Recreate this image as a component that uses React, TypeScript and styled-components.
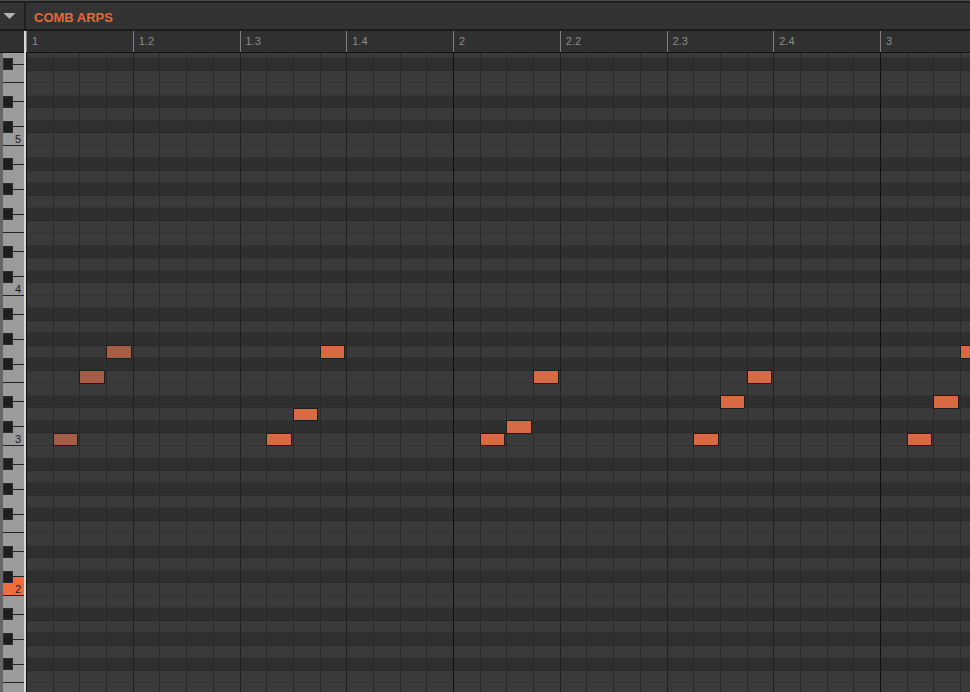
import styled, { createGlobalStyle } from "styled-components";

const ROW_H = 12.5;
const STEP = 26.6875;
const BEAT = STEP * 4;
const BAR = BEAT * 4;
const TOP_KEY = 31;
const BOTTOM_KEY = -20;
const BLACK = [1, 3, 6, 8, 10];

interface NoteData {
  step: number;
  key: number;
  muted?: boolean;
}

const notes: NoteData[] = [
  { step: 1, key: 0, muted: true },
  { step: 2, key: 5, muted: true },
  { step: 3, key: 7, muted: true },
  { step: 9, key: 0 },
  { step: 10, key: 2 },
  { step: 11, key: 7 },
  { step: 17, key: 0 },
  { step: 18, key: 1 },
  { step: 19, key: 5 },
  { step: 25, key: 0 },
  { step: 26, key: 3 },
  { step: 27, key: 5 },
  { step: 33, key: 0 },
  { step: 34, key: 3 },
  { step: 35, key: 7 },
];

const beats = ["1", "1.2", "1.3", "1.4", "2", "2.2", "2.3", "2.4", "3"];

const keys: number[] = [];
for (let k = TOP_KEY; k >= BOTTOM_KEY; k--) keys.push(k);

const pc = (k: number) => ((k % 12) + 12) % 12;
const isBlack = (k: number) => BLACK.includes(pc(k));

const GlobalStyle = createGlobalStyle`
  html, body {
    margin: 0;
    padding: 0;
    background: #1f1f1f;
  }
  * {
    box-sizing: border-box;
  }
`;

const Root = styled.div`
  width: 970px;
  height: 692px;
  overflow: hidden;
  display: flex;
  flex-direction: column;
  background: #1f1f1f;
  border-top: 1px solid #4a4a4a;
  font-family: "Liberation Sans", Arial, sans-serif;
`;

const Header = styled.div`
  display: flex;
  height: 28px;
  margin-top: 2px;
  background: #333333;
  border-bottom: 2px solid #1c1c1c;
  flex-shrink: 0;
`;

const DropCell = styled.div`
  width: 26px;
  display: flex;
  align-items: center;
  padding-left: 3px;
  border-right: 2px solid #1f1f1f;
`;

const Title = styled.div`
  padding: 2px 0 0 8px;
  display: flex;
  align-items: center;
  color: #e4683b;
  font-size: 13px;
  font-weight: bold;
`;

const Main = styled.div`
  flex: 1;
  display: grid;
  grid-template-columns: 24px 2px 1fr;
  grid-template-rows: 22px 1fr;
  min-height: 0;
`;

const Corner = styled.div`
  background: #303030;
  border-bottom: 1px solid #121212;
`;

const Separator = styled.div`
  grid-row: 1 / 3;
  grid-column: 2;
  background: #dadada;
`;

const Ruler = styled.div`
  display: flex;
  overflow: hidden;
  background: #303030;
  border-bottom: 1px solid #121212;
`;

const BeatCell = styled.div`
  flex: 0 0 ${BEAT}px;
  border-left: 1px solid #808080;
  padding-left: 5px;
  color: #8c8c8c;
  font-size: 11px;
  line-height: 21px;
`;

const Keyboard = styled.div`
  overflow: hidden;
  background: #666666;
  padding-left: 3px;
`;

const Stack = styled.div`
  margin-top: -7.5px;
  display: flex;
  flex-direction: column;
`;

const KeyRow = styled.div<{ $black: boolean; $edge: boolean; $active: boolean; $below: boolean }>`
  height: ${ROW_H}px;
  flex-shrink: 0;
  display: flex;
  align-items: center;
  justify-content: ${(p) => (p.$black ? "flex-start" : "flex-end")};
  background: ${(p) =>
    p.$active
      ? "#f26d3d"
      : p.$below
      ? "linear-gradient(to bottom, #9b9b9b 50%, #f26d3d 50%)"
      : "#9b9b9b"};
  box-shadow: ${(p) => (p.$edge ? "inset 0 -1px 0 #232323" : "none")};
`;

const BlackKey = styled.div`
  width: 10px;
  height: 12px;
  align-self: flex-start;
  background: #1e1e1e;
  border: 1px solid #2c2c2c;
  flex-shrink: 0;
`;

const KeyLine = styled.div`
  flex: 1;
  height: 1px;
  background: #262626;
`;

const OctaveLabel = styled.span`
  align-self: flex-start;
  padding: 1px 3px 0 0;
  font-size: 11px;
  line-height: 11px;
  color: #1c1c1c;
`;

const Grid = styled.div`
  overflow: hidden;
`;

const GridRow = styled.div<{ $black: boolean }>`
  position: relative;
  height: ${ROW_H}px;
  flex-shrink: 0;
  background-color: ${(p) => (p.$black ? "#2f2f2f" : "#3a3a3a")};
  background-image: repeating-linear-gradient(to right, #101010 0 1px, transparent 1px ${BAR}px),
    repeating-linear-gradient(to right, #202020 0 1px, transparent 1px ${BEAT}px),
    repeating-linear-gradient(to right, #292929 0 1px, transparent 1px ${STEP}px),
    linear-gradient(to bottom, transparent calc(100% - 1px), rgba(0, 0, 0, 0.12) calc(100% - 1px));
`;

const Note = styled.div<{ $muted?: boolean }>`
  position: absolute;
  top: -0.5px;
  width: 25.5px;
  height: 13.5px;
  background: ${(p) => (p.$muted ? "#a65c45" : "#d76a42")};
  border: 1px solid #1d1d1d;
  z-index: 1;
`;

const App = () => {
  return (
    <Root>
      <GlobalStyle />
      <Header>
        <DropCell>
          <svg width="13" height="8" viewBox="0 0 13 8">
            <polygon points="0.5,1 12.5,1 6.5,7" fill="#b4b4b4" />
          </svg>
        </DropCell>
        <Title>COMB ARPS</Title>
      </Header>
      <Main>
        <Corner />
        <Separator />
        <Ruler>
          {beats.map((b) => (
            <BeatCell key={b}>{b}</BeatCell>
          ))}
        </Ruler>
        <Keyboard>
          <Stack>
            {keys.map((k) => {
              const n = pc(k);
              const black = isBlack(k);
              return (
                <KeyRow
                  key={k}
                  $black={black}
                  $edge={n === 0 || n === 5}
                  $active={k === -12}
                  $below={k === -11}
                >
                  {black ? (
                    <>
                      <BlackKey />
                      <KeyLine />
                    </>
                  ) : n === 0 ? (
                    <OctaveLabel>{3 + Math.floor(k / 12)}</OctaveLabel>
                  ) : null}
                </KeyRow>
              );
            })}
          </Stack>
        </Keyboard>
        <Grid>
          <Stack>
            {keys.map((k) => (
              <GridRow key={k} $black={isBlack(k)}>
                {notes
                  .filter((n) => n.key === k)
                  .map((n) => (
                    <Note key={n.step} $muted={n.muted} style={{ left: n.step * STEP }} />
                  ))}
              </GridRow>
            ))}
          </Stack>
        </Grid>
      </Main>
    </Root>
  );
};

export default App;
